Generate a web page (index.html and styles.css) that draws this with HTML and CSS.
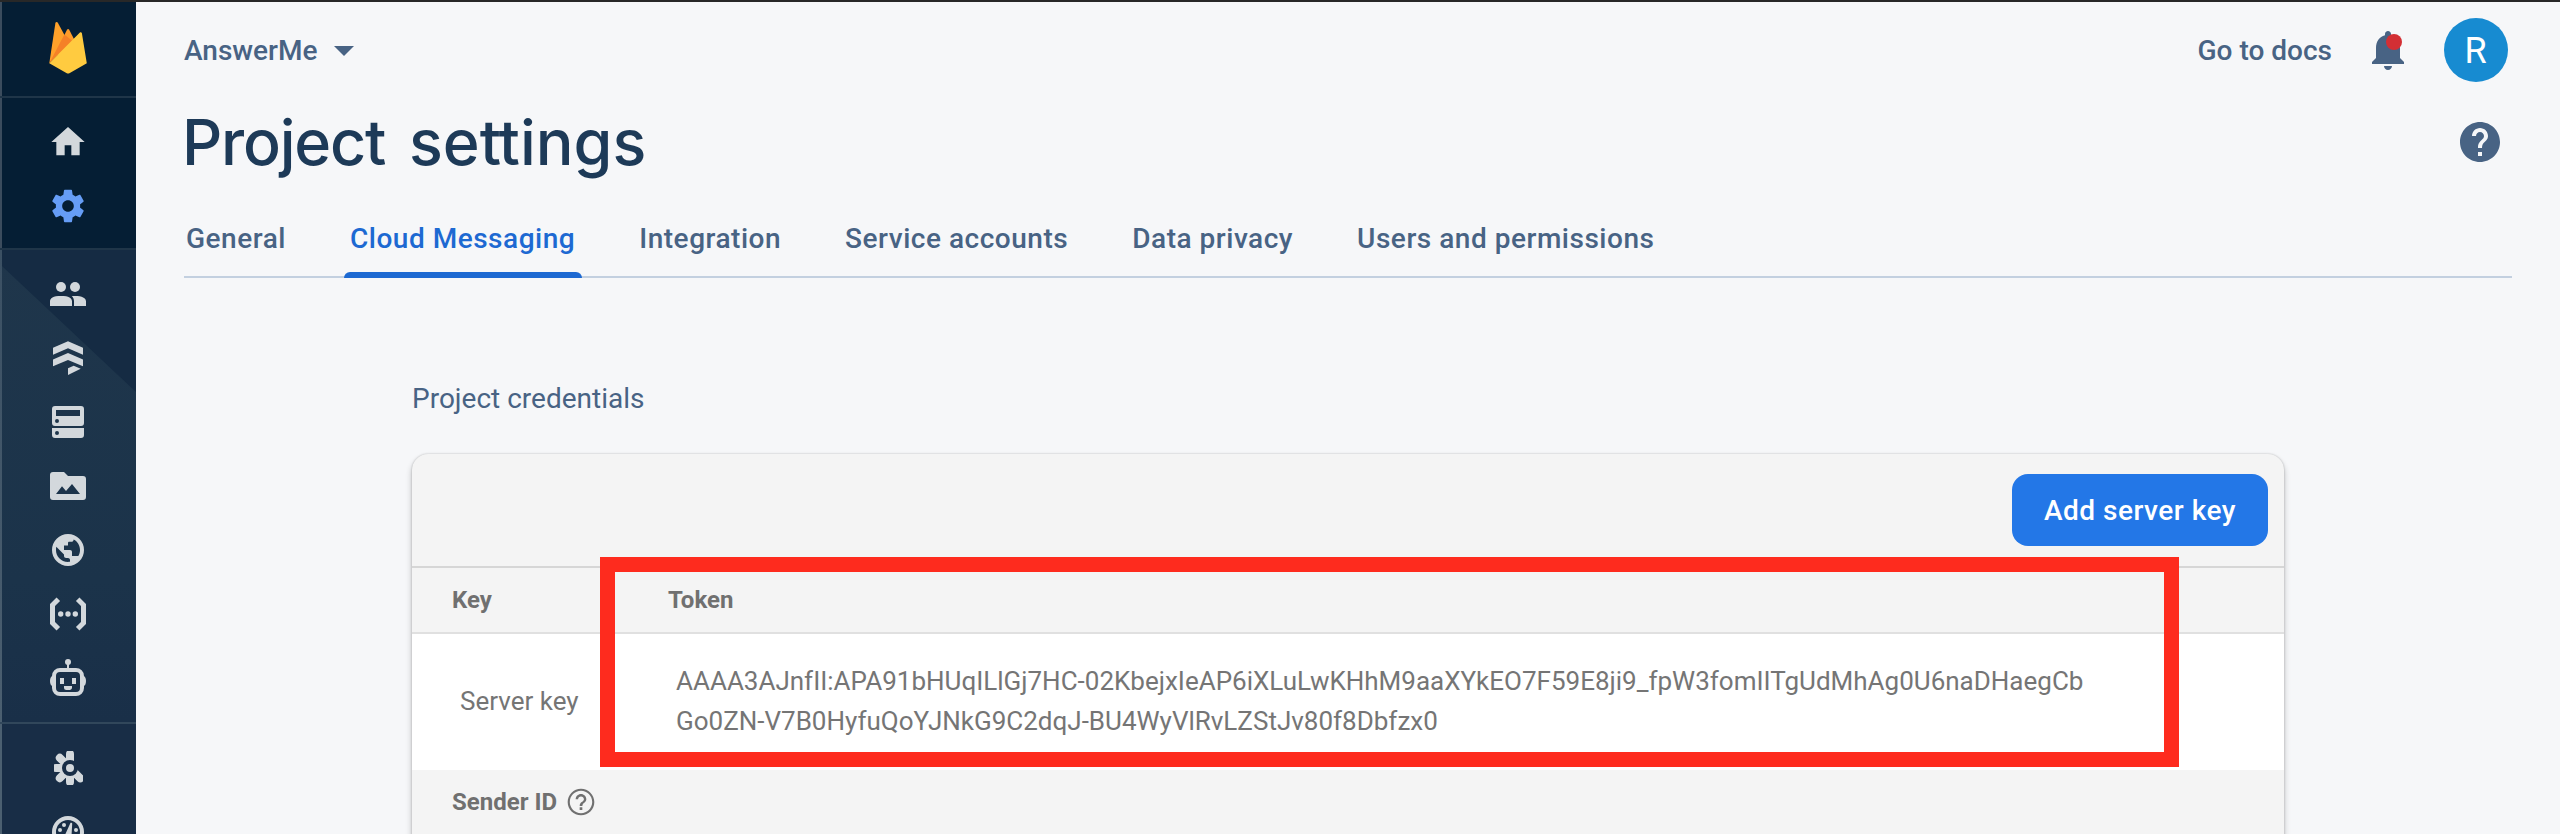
FILE: index.html
```
<!DOCTYPE html>
<html lang="en">
<head>
<meta charset="utf-8">
<title>Project settings</title>
<link rel="stylesheet" href="styles.css">
</head>
<body>
<div class="app">
  <aside class="sidebar">
    <a class="logo">
      <svg width="40" height="56" viewBox="48 20 40 56">
        <path fill="#ffa12a" d="M49.3 63.3 55.4 22.9c.2-1.2 1.7-1.3 2.3-.4L65 36 55 56z"/>
        <path fill="#ff9b2a" d="M60 44 67 29.7c.5-.8 1.7-.8 2.200 0L75 41 58 57z"/>
        <path fill="#f58127" d="M49.3 63.3 64.4 34.6 72.5 41z"/>
        <path fill="#ffcb40" d="M49.3 63.3 79.9 32.6c.7-.7 1.8-.3 2 .6l4.900 30.1L69.4 73.2c-.8.5-1.8.5-2.6 0z"/>
      </svg>
    </a>
    <nav class="group group-top">
      <svg class="icon" viewBox="0 0 24 24"><path d="M10 20v-6h4v6h5v-8h3L12 3 2 12h3v8z"/></svg>
      <svg class="icon gear" viewBox="0 0 24 24"><path d="M19.430 12.980c.04-.32.07-.64.07-.98s-.03-.66-.07-.98l2.110-1.650c.19-.15.24-.42.12-.64l-2-3.460c-.12-.22-.39-.3-.61-.22l-2.490 1c-.52-.4-1.080-.73-1.690-.98l-.38-2.650C14.460 2.180 14.250 2 14 2h-4c-.25 0-.46.18-.49.42l-.38 2.650c-.61.25-1.170.59-1.690.98l-2.490-1c-.23-.09-.49 0-.61.22l-2 3.460c-.13.22-.07.49.12.64l2.110 1.650c-.04.32-.07.65-.07.98s.03.66.07.98l-2.110 1.650c-.19.15-.24.42-.12.64l2 3.460c.12.22.39.3.61.22l2.490-1c.52.4 1.080.73 1.690.98l.38 2.650c.03.24.24.42.49.42h4c.25 0 .46-.18.49-.42l.38-2.650c.61-.25 1.170-.59 1.690-.98l2.490 1c.23.09.49 0 .61-.22l2-3.460c.12-.22.07-.49-.12-.64zM12 15.600c-2 0-3.600-1.600-3.600-3.600s1.600-3.600 3.600-3.600 3.600 1.600 3.600 3.600-1.600 3.600-3.600 3.600z"/></svg>
    </nav>
    <nav class="group group-build">
      <svg class="icon" viewBox="0 0 40 40"><circle cx="13" cy="13" r="5"/><circle cx="27" cy="13" r="5"/><path d="M2 32v-4.500C2 24 5 22 13 22s11 2 11 5.500V32zM23.700 22.200C33 21.600 38 23.500 38 27.500V32H26v-4.500c0-2.200-.6-3.900-2.300-5.300z"/></svg>
      <svg class="icon" viewBox="0 0 40 40"><path d="M20 3.300 35 9.700v7L20 10.300 5 16.700v-7zM20 15l15 6.400v6.900L20 22 5 28.300v-6.900zM20 30.300l5.700-2.600 7 3L20 37z"/></svg>
      <svg class="icon" viewBox="0 0 40 40"><path fill-rule="evenodd" d="M7 4h26a3 3 0 0 1 3 3v14a3 3 0 0 1-3 3H7a3 3 0 0 1-3-3V7a3 3 0 0 1 3-3zm1 4v6h24V8zm1 9a2 2 0 1 0 0 4 2 2 0 0 0 0-4zM4 26h32v7a3 3 0 0 1-3 3H7a3 3 0 0 1-3-3zm5 3a2 2 0 1 0 0 4 2 2 0 0 0 0-4z"/></svg>
      <svg class="icon" viewBox="0 0 40 40"><path fill-rule="evenodd" d="M5 6h11l4 4h15a3 3 0 0 1 3 3v18a3 3 0 0 1-3 3H5a3 3 0 0 1-3-3V9a3 3 0 0 1 3-3zm3 22h24l-8-10-6 7-4-4.700z"/></svg>
      <svg class="icon" viewBox="0 0 40 40"><path fill-rule="evenodd" d="M20 4a16 16 0 1 0 0 32 16 16 0 0 0 0-32zM8.300 16.700 16 24.500v1.200c0 1.300.9 2.300 2.200 2.300H20c1 0 2 .9 2 2v1.800C14 33 7.800 27 8 20c0-1.200.1-2.200.3-3.300zM16 15.500h4V13c0-.8.6-1.300 1.300-1.300h2c1.300 0 2.200-.9 2.400-2.300C29.500 11.200 32 15.300 32 20c0 2.300-.6 4.300-1.700 6H24v-4c0-1.200-.8-2-2-2h-6z"/></svg>
      <svg class="icon" viewBox="0 0 40 40"><path class="stroke" stroke-width="5" d="M10.300 5.200 4.500 11v18l5.800 5.800M29.700 5.200 35.500 11v18l-5.800 5.800"/><circle cx="12.700" cy="20" r="2.700"/><circle cx="20" cy="20" r="2.700"/><circle cx="27.300" cy="20" r="2.700"/></svg>
      <svg class="icon" viewBox="0 0 40 40"><circle cx="20" cy="4" r="3"/><path d="M19 5h2v6h-2z"/><rect class="stroke" x="6" y="12" width="28" height="24" rx="6" stroke-width="4"/><path d="M5 18v10c-2 0-3-2-3-5s1-5 3-5zM35 18v10c2 0 3-2 3-5s-1-5-3-5zM12 20h4v6h-4zM24 20h4v6h-4zM16 28h8v1.500c0 1.400-1 2.500-2.500 2.500h-3A2.500 2.500 0 0 1 16 29.500z"/></svg>
    </nav>
    <nav class="group group-more">
      <svg class="icon" viewBox="0 0 40 40"><mask id="hub"><path fill="#fff" d="M0 0h40v40H0z"/><circle cx="22" cy="20" r="8" fill="#000"/></mask><g mask="url(#hub)"><path class="stroke round" stroke-width="8" d="M22 20V6M22 20v14M22 20H8M22 20 11.800 9.800M22 20 11.800 30.200M22 20l10.300 10.300"/><path d="M22 8h4v5.500h-4z"/></g><circle cx="22" cy="20" r="4"/></svg>
      <svg class="icon" viewBox="0 0 40 40"><circle class="stroke" cx="20" cy="20" r="14" stroke-width="4"/><circle cx="12" cy="18" r="2"/><circle cx="16" cy="13" r="2"/><circle cx="28" cy="18" r="2"/><path d="M22.300 11.200c.5-.9 2-.5 1.900.6L23.500 24h-7z"/></svg>
    </nav>
  </aside>

  <main class="main">
    <header class="topbar">
      <div class="project"><span class="label">AnswerMe</span><svg class="caret" width="20" height="10" viewBox="0 0 20 10"><path d="M0 0h20L10 10z"/></svg></div>
      <div class="tools">
        <a class="docs label">Go to docs</a>
        <span class="bell">
          <svg width="48" height="48" viewBox="0 0 24 24"><path d="M12 22c1.100 0 2-.9 2-2h-4c0 1.100.89 2 2 2zm6-6v-5c0-3.070-1.640-5.640-4.500-6.320V4c0-.83-.67-1.500-1.500-1.500s-1.500.67-1.500 1.500v.68C7.630 5.360 6 7.920 6 11v5l-2 2v1h16v-1l-2-2z"/><circle class="dot" cx="15" cy="8" r="4"/></svg>
        </span>
        <span class="avatar">R</span>
      </div>
    </header>

    <div class="title-row">
      <h1 class="title"><span class="word">Project</span> <span>se<span class="tight">t</span>tings</span></h1>
      <svg class="help" width="48" height="48" viewBox="0 0 24 24"><path d="M12 2C6.480 2 2 6.480 2 12s4.480 10 10 10 10-4.480 10-10S17.520 2 12 2zm1 17h-2v-2h2v2zm2.070-7.750-.9.920C13.450 12.900 13 13.500 13 15h-2v-.5c0-1.100.45-2.100 1.170-2.830l1.240-1.260c.37-.36.59-.86.59-1.410 0-1.100-.9-2-2-2s-2 .9-2 2H8c0-2.210 1.790-4 4-4s4 1.790 4 4c0 .88-.36 1.680-.93 2.250z"/></svg>
    </div>

    <nav class="tabs">
      <a class="tab">General</a>
      <a class="tab active">Cloud Messaging</a>
      <a class="tab">Integration</a>
      <a class="tab">Service accounts</a>
      <a class="tab">Data privacy</a>
      <a class="tab">Users and permissions</a>
    </nav>

    <section class="credentials">
      <h2 class="subtitle">Project credentials</h2>
      <div class="card">
        <div class="card-actions"><button class="button">Add server key</button></div>
        <div class="row head"><span>Key</span><span>Token</span></div>
        <div class="row data">
          <span>Server key</span>
          <span>AAAA3AJnfII:APA91bHUqILlGj7HC-02KbejxIeAP6iXLuLwKHhM9aaXYkEO7F59E8ji9_fpW3fomIITgUdMhAg0U6naDHaegCb<br>Go0ZN-V7B0HyfuQoYJNkG9C2dqJ-BU4WyVlRvLZStJv80f8Dbfzx0</span>
        </div>
        <div class="row sender">Sender ID
          <svg width="32" height="32" viewBox="0 0 24 24"><path d="M11 18h2v-2h-2v2zm1-16C6.480 2 2 6.480 2 12s4.480 10 10 10 10-4.480 10-10S17.520 2 12 2zm0 18.400c-4.600 0-8.400-3.800-8.400-8.400S7.400 3.600 12 3.600s8.400 3.800 8.400 8.400-3.800 8.400-8.400 8.400zM12 6c-2.210 0-4 1.790-4 4h1.800c0-1.200 1-2.200 2.200-2.200s2.200 1 2.200 2.200c0 2-3.200 1.750-3.200 5h2c0-2.250 3-2.500 3-5 0-2.210-1.790-4-4-4z"/></svg>
        </div>
        <div class="highlight"></div>
      </div>
    </section>
  </main>
</div>
</body>
</html>
```

FILE: styles.css
```
* { box-sizing: border-box; }
body {
  margin: 0;
  height: 834px;
  overflow: hidden;
  background: #f6f7f9;
  font-family: Roboto, sans-serif;
}
.app {
  display: grid;
  grid-template-columns: 136px 1fr;
  height: 834px;
  border-top: 2px solid #282828;
  overflow: hidden;
}

/* Sidebar */
.sidebar {
  display: flex;
  flex-direction: column;
  height: 832px;
  overflow: hidden;
  background: #051e34;
  box-shadow: inset 2px 0 #3b4c5d;
}
.logo {
  display: flex;
  justify-content: center;
  flex: none;
  height: 96px;
  padding-top: 18px;
  border-bottom: 2px solid #1f3548;
}
.group {
  display: flex;
  flex-direction: column;
  flex: none;
  align-items: center;
  gap: 24px;
}
.group-top { height: 152px; padding-top: 24px; border-bottom: 2px solid #1f3548; }
.group-build {
  position: relative;
  height: 474px;
  padding-top: 24px;
  border-bottom: 2px solid #31475b;
  background:
    linear-gradient(#3b5063, #4b5f70) 0 0 / 2px 100% no-repeat,
    linear-gradient(#1f364b, #1b334a 70%, #192f48);
}
.group-build::before {
  content: "";
  position: absolute;
  inset: 0 0 auto 2px;
  height: 142px;
  background: #152b43;
  clip-path: polygon(0 0, 100% 0, 100% 100%, 0 16px);
}
.group-more {
  height: 180px;
  padding-top: 24px;
  background: linear-gradient(#4b5f70, #4b5f70) 0 0 / 2px 100% no-repeat, #182d46;
}
.icon { position: relative; flex: none; width: 40px; height: 40px; fill: #d3d8dc; }
.gear { fill: #669df6; transform: scale(.97); }
.stroke { fill: none; stroke: #d3d8dc; }
.round { stroke-linecap: round; }

/* Header */
.main { padding-left: 48px; min-width: 0; }
.topbar {
  display: flex;
  align-items: center;
  justify-content: space-between;
  height: 96px;
  padding-right: 52px;
  color: #486384;
  font-size: 28px;
  font-weight: 500;
  line-height: 32px;
}
.label { padding-top: 2px; }
.project { display: flex; align-items: center; gap: 17px; }
.caret { margin-top: 2px; fill: #486384; }
.tools { display: flex; align-items: center; }
.docs { margin-right: 32px; }
.bell { display: flex; margin-right: 32px; fill: #486384; }
.dot { fill: #d32f34; }
.avatar {
  display: flex;
  align-items: center;
  justify-content: center;
  width: 64px;
  height: 64px;
  padding: 2px 1px 0 0;
  border-radius: 50%;
  background: #178bd1;
  color: #fff;
  font-size: 36px;
  font-weight: 400;
}
.title-row {
  display: flex;
  align-items: center;
  justify-content: space-between;
  height: 88px;
  padding-right: 56px;
}
.title {
  margin: 0 0 1px -2px;
  color: #1d3a58;
  font: 500 62.800px/76px Inter, sans-serif;
}
.word { letter-spacing: -1.200px; margin-right: 7px; }
.tight { letter-spacing: -2.500px; }
.help { fill: #486384; }

/* Tabs */
.tabs {
  display: flex;
  gap: 64px;
  height: 92px;
  margin-right: 48px;
  padding: 37px 0 0 2px;
  border-bottom: 2px solid #c3d0e0;
}
.tab {
  position: relative;
  color: #486384;
  font-size: 28px;
  font-weight: 500;
  line-height: 32px;
  letter-spacing: .52px;
  white-space: nowrap;
}
.active { color: #1d69d2; }
.active::after {
  content: "";
  position: absolute;
  left: -6px;
  right: -7px;
  bottom: -2px;
  height: 6px;
  border-radius: 6px 6px 0 0;
  background: #1d69d2;
}

/* Credentials card */
.credentials { width: 1872px; margin-left: 228px; padding-top: 105px; }
.subtitle {
  margin: 0 0 39px;
  color: #486384;
  font-size: 28px;
  font-weight: 400;
  line-height: 32px;
}
.card {
  position: relative;
  height: 480px;
  border-radius: 16px;
  background: #f4f4f4;
  box-shadow: 0 0 2px rgba(0, 0, 0, .24), 0 4px 6px rgba(0, 0, 0, .24);
}
.card-actions {
  display: flex;
  align-items: center;
  justify-content: flex-end;
  height: 114px;
  padding-right: 16px;
  border-bottom: 2px solid #d6d6d6;
}
.button {
  height: 72px;
  padding: 2px 32px 0;
  border: 0;
  border-radius: 16px;
  background: #2377e7;
  color: #fff;
  font: 500 28px/32px Roboto, sans-serif;
  letter-spacing: .5px;
}
.row { display: grid; grid-template-columns: 216px 1fr; align-items: center; padding-left: 40px; }
.head {
  height: 66px;
  border-bottom: 2px solid #e0e0e0;
  color: #707070;
  font-size: 24px;
  font-weight: 700;
  line-height: 28px;
}
.data {
  height: 136px;
  padding: 0 0 2px 48px;
  background: #fff;
  color: #757575;
  font-size: 26px;
  line-height: 40px;
}
.sender {
  display: flex;
  gap: 8px;
  height: 64px;
  color: #707070;
  font-size: 24px;
  font-weight: 700;
  line-height: 28px;
  fill: #707070;
}
.highlight {
  position: absolute;
  left: 188px;
  top: 103px;
  width: 1579px;
  height: 210px;
  border: 15px solid #fe2b1e;
}
```
